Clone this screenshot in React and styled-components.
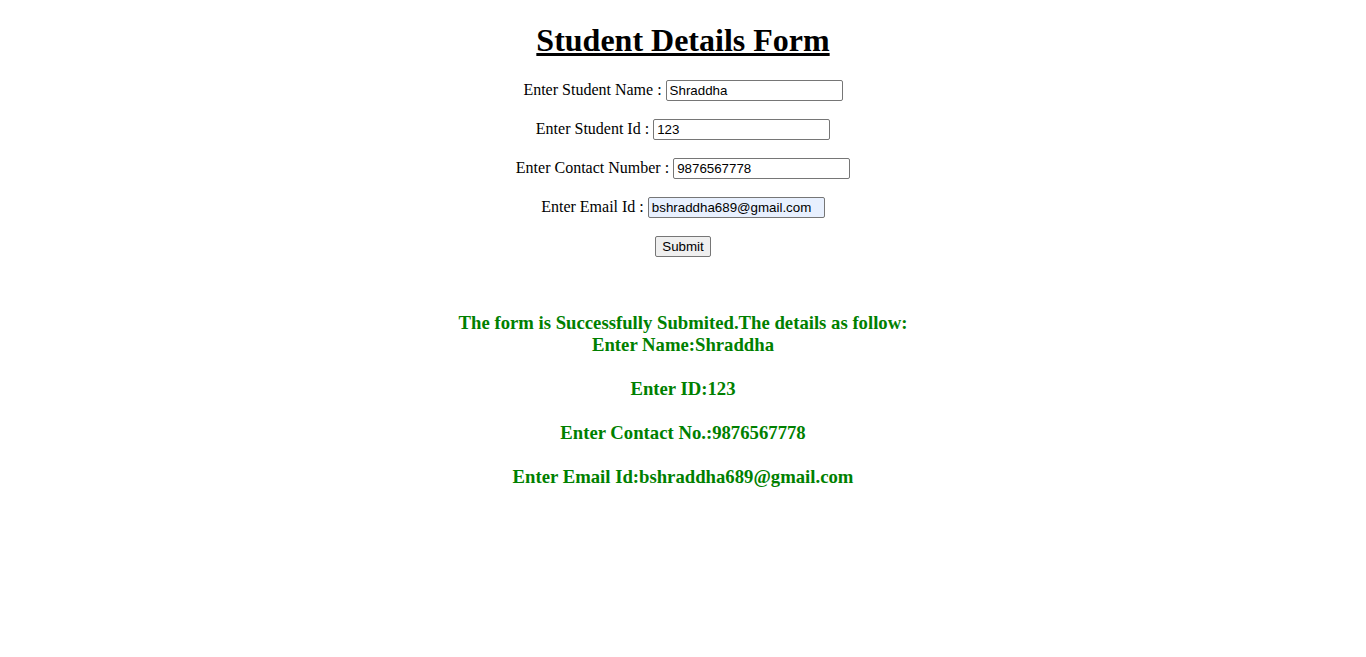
import styled, { createGlobalStyle } from "styled-components";

const GlobalStyle = createGlobalStyle`
  body {
    margin: 8px;
    font-family: "Liberation Serif", "Times New Roman", serif;
    background-color: #fff;
    color: #000;
  }
`;

const Page = styled.div`
  text-align: center;
`;

const Title = styled.h1`
  font-size: 32px;
  font-weight: bold;
  text-decoration: underline;
  margin: 14.44px 0 18.44px;
`;

const Row = styled.p`
  font-size: 16px;
  line-height: 23px;
  margin: 16px 0;
`;

const Field = styled.input`
  font-family: "Liberation Sans", Arial, sans-serif;
  font-size: 13.333px;
  width: 177px;
  height: 21px;
  box-sizing: border-box;
  padding: 1px 3px;
  border: 1px solid #767676;
  border-radius: 2px;
  color: #000;
  background-color: ${(props) => (props.$filled ? "#e8f0fe" : "#fff")};
  vertical-align: baseline;
`;

const SubmitButton = styled.button`
  font-family: "Liberation Sans", Arial, sans-serif;
  font-size: 13.333px;
  padding: 1px 6px;
  height: 21px;
  background-color: #efefef;
  border: 1px solid #767676;
  border-radius: 2px;
  color: #000;
`;

const Result = styled.h3`
  color: green;
  font-size: 18.72px;
  font-weight: bold;
  margin: 55px 0 18.72px;
  line-height: 22px;
`;

const fields = [
  { label: "Enter Student Name", value: "Shraddha" },
  { label: "Enter Student Id", value: "123" },
  { label: "Enter Contact Number", value: "9876567778" },
  { label: "Enter Email Id", value: "bshraddha689@gmail.com", filled: true },
];

function App() {
  return (
    <Page>
      <GlobalStyle />
      <Title>Student Details Form</Title>
      <form onSubmit={(e) => e.preventDefault()}>
        {fields.map((f) => (
          <Row key={f.label}>
            {f.label} : <Field defaultValue={f.value} $filled={f.filled} />
          </Row>
        ))}
        <Row>
          <SubmitButton type="submit">Submit</SubmitButton>
        </Row>
      </form>
      <Result>
        The form is Successfully Submited.The details as follow:
        <br />
        Enter Name:Shraddha
        <br />
        <br />
        Enter ID:123
        <br />
        <br />
        Enter Contact No.:9876567778
        <br />
        <br />
        Enter Email Id:bshraddha689@gmail.com
      </Result>
    </Page>
  );
}

export default App;
